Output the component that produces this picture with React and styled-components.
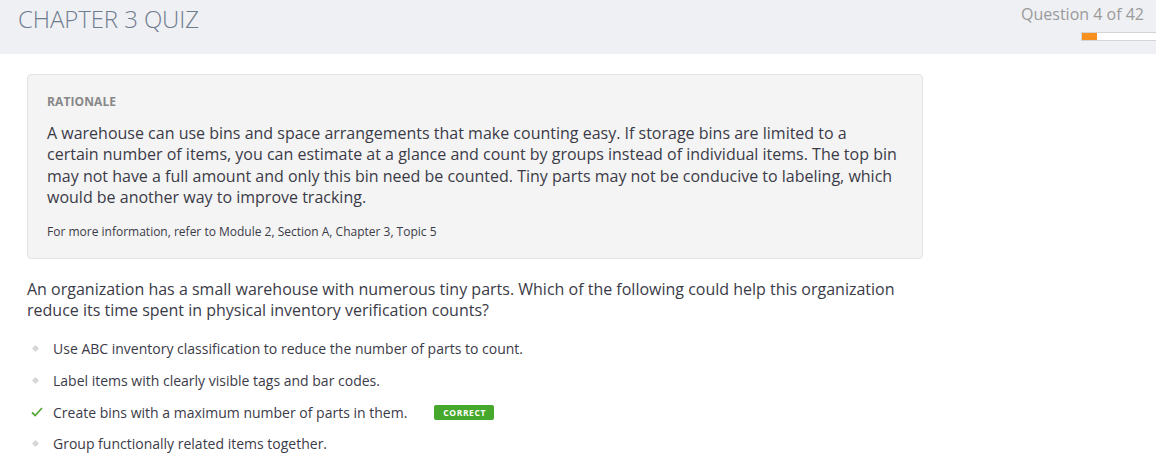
import React from "react";
import styled, { createGlobalStyle } from "styled-components";

const Global = createGlobalStyle`
  html, body { margin: 0; padding: 0; background: #ffffff; }
  body { font-family: "Open Sans", "Liberation Sans", sans-serif; color: #3d3d4a; }
  * { box-sizing: border-box; }
`;

const Header = styled.header`
  height: 54px;
  background: #eff0f4;
  display: flex;
  justify-content: space-between;
  align-items: flex-start;
`;

const Title = styled.h1`
  margin: 0;
  padding: 2px 0 0 18px;
  font-weight: 300;
  font-size: 24px;
  line-height: 34px;
  color: #6f7c8e;
  letter-spacing: -0.1px;
`;

const Progress = styled.div`
  display: flex;
  flex-direction: column;
  align-items: flex-end;
  padding-top: 3px;
`;

const Counter = styled.div`
  font-size: 16px;
  line-height: 22px;
  color: #9a9a9a;
  padding-right: 12px;
`;

const Track = styled.div`
  margin-top: 7px;
  width: 75px;
  height: 9px;
  background: #ffffff;
  border: 1px solid #d4d4d4;
  border-right: none;
`;

const Fill = styled.div`
  height: 100%;
  background: #f6901e;
`;

const Main = styled.main`
  padding: 20px 0 0 27px;
`;

const Card = styled.section`
  width: 896px;
  background: #f4f4f4;
  border: 1px solid #e2e2e2;
  border-radius: 4px;
  padding: 19px 19px 18px 19px;
`;

const Label = styled.div`
  font-size: 12px;
  font-weight: 700;
  line-height: 16px;
  color: #878787;
  letter-spacing: 0.1px;
`;

const Body = styled.p`
  margin: 13px 0 0;
  width: 852px;
  font-size: 16px;
  line-height: 21.3px;
  color: #3b3b48;
`;

const Note = styled.p`
  margin: 16px 0 0;
  font-size: 12px;
  line-height: 16px;
  color: #3b3b48;
`;

const Question = styled.p`
  margin: 20px 0 0;
  width: 900px;
  font-size: 16px;
  line-height: 21.3px;
  color: #3b3b48;
`;

const Options = styled.ul`
  list-style: none;
  margin: 11px 0 0;
  padding: 0;
`;

const Option = styled.li`
  display: flex;
  align-items: center;
  height: 31.7px;
  font-size: 14px;
  color: #3b3b48;
`;

const Marker = styled.span`
  width: 26px;
  display: flex;
  align-items: center;
  padding-left: 4px;
`;

const Dot = styled.span`
  width: 5px;
  height: 5px;
  background: #d6d6d6;
  transform: rotate(45deg);
  margin-left: 2px;
  border-radius: 1px;
`;

const Badge = styled.span`
  margin-left: 27px;
  background: #45a72b;
  color: #ffffff;
  font-size: 8.5px;
  font-weight: 700;
  letter-spacing: 0.6px;
  line-height: 15px;
  height: 15px;
  padding: 0 8px 0 9px;
  border-radius: 2px;
`;

const Check = () => (
  <svg width="12" height="10" viewBox="0 0 12 10">
    <path d="M1 5.5 L4.2 8.5 L11 1" fill="none" stroke="#5aa83a" strokeWidth="1.8" />
  </svg>
);

const options = [
  { text: "Use ABC inventory classification to reduce the number of parts to count." },
  { text: "Label items with clearly visible tags and bar codes." },
  { text: "Create bins with a maximum number of parts in them.", correct: true },
  { text: "Group functionally related items together." },
];

export default function App() {
  return (
    <>
      <Global />
      <Header>
        <Title>CHAPTER 3 QUIZ</Title>
        <Progress>
          <Counter>Question 4 of 42</Counter>
          <Track>
            <Fill style={{ width: `${(4 / 42) * 210}%` }} />
          </Track>
        </Progress>
      </Header>
      <Main>
        <Card>
          <Label>RATIONALE</Label>
          <Body>
            A warehouse can use bins and space arrangements that make counting easy. If storage bins are limited to a
            certain number of items, you can estimate at a glance and count by groups instead of individual items. The top bin
            may not have a full amount and only this bin need be counted. Tiny parts may not be conducive to labeling, which
            would be another way to improve tracking.
          </Body>
          <Note>For more information, refer to Module 2, Section A, Chapter 3, Topic 5</Note>
        </Card>
        <Question>
          An organization has a small warehouse with numerous tiny parts. Which of the following could help this organization
          reduce its time spent in physical inventory verification counts?
        </Question>
        <Options>
          {options.map((o) => (
            <Option key={o.text}>
              <Marker>{o.correct ? <Check /> : <Dot />}</Marker>
              {o.text}
              {o.correct && <Badge>CORRECT</Badge>}
            </Option>
          ))}
        </Options>
      </Main>
    </>
  );
}
